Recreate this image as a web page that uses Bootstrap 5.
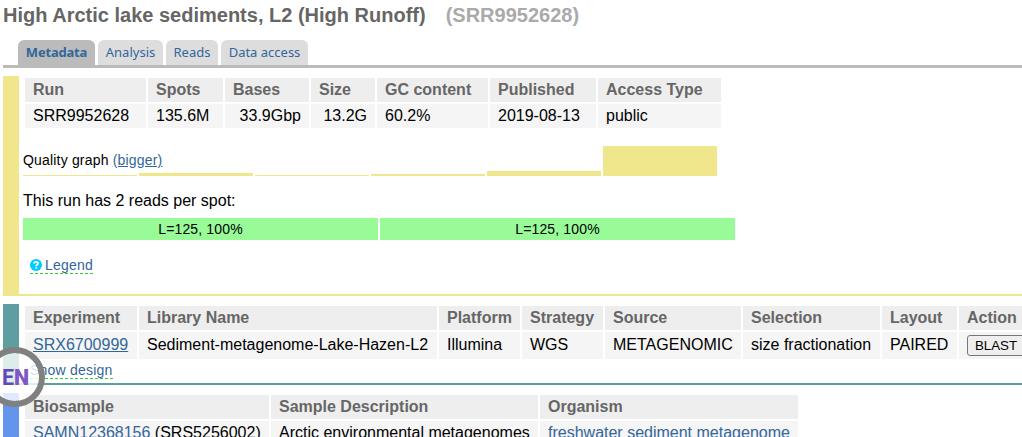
<!DOCTYPE html>
<html lang="en">
<head>
<meta charset="utf-8">
<title>SRR9952628 - Run Browser</title>
<link href="https://cdn.jsdelivr.net/npm/bootstrap@5.3.0/dist/css/bootstrap.min.css" rel="stylesheet">
<style>
body{font-family:"Liberation Sans",Arial,sans-serif;font-size:16px;line-height:20px;color:#000;background:#fff;height:437px;overflow:hidden}
a{color:#369}
.page-wrap{padding-left:3px;height:437px;overflow:hidden}
.run-title{font-size:20px;line-height:24px;font-weight:700;color:#666;margin:0;padding-top:3px;height:40px;white-space:pre}
.run-title span{color:#aaa;margin-left:20px}
.run-tabs{border-bottom:3px solid #bbb;padding-left:15px;gap:3px;height:28px;flex-wrap:nowrap}
.run-tabs .nav-link{height:25px;padding:0;text-align:center;background:#ddd;color:#369;border-radius:6px 6px 0 0;font:13px/25px "Noto Sans","Open Sans",sans-serif;white-space:nowrap}
.run-tabs .nav-link.active{background:#bbb;font-weight:700;letter-spacing:-.2px}
.panel{border-left:16px solid;border-bottom:2px solid;padding-left:4px;margin-bottom:8px}
.panel-run{border-color:khaki;height:220px;margin-top:8px}
.panel-exp{border-color:cadetblue;height:81px}
.panel-bio{border-color:cornflowerblue;height:90px}
.grid-table{table-layout:fixed;border-collapse:separate;border-spacing:2px;white-space:nowrap}
.grid-table th{background:#eee;color:#666;height:24px;padding:1px 8px;line-height:22px}
.grid-table td{background:#f5f5f5;height:24px;padding:1px 8px;line-height:22px}
.panel-exp .grid-table td{height:27px;padding:0 8px 1px}
.fs14{font-size:14px;letter-spacing:.18px}
.quality{height:30px;margin-top:16px;gap:2px}
.qbar{width:114px;background:khaki}
.qlabel{left:0;top:4px}
.reads{gap:2px;font-size:14px;letter-spacing:.15px;line-height:22px}
.reads div{width:355px;background:palegreen;text-align:center}
.toggle{font-size:14px;letter-spacing:.22px;line-height:16px;border-bottom:1px dashed #32cd32;text-decoration:none;margin-left:7px}
.design-row{padding-top:1px}
.blast{height:21px;width:58px;border:1px solid #767676;border-radius:3px;background:#efefef;font-size:13.3px;line-height:19px;padding:0;color:#000;display:block}
.lang{left:-15px;top:347px;width:60px;height:60px;border:6px solid #808080;background:rgba(255,255,255,.8);background-clip:padding-box;font:700 21.5px/50px Roboto,sans-serif;padding-left:11px;color:#6248bb}
.lang b{color:#7d58c6}
</style>
</head>
<body>
<div class="page-wrap position-relative">
<h1 class="run-title">High Arctic lake sediments, L2 (High Runoff)<span>(SRR9952628)</span></h1>
<nav class="nav run-tabs">
<a class="nav-link active" style="width:77px" href="#">Metadata</a><a class="nav-link" style="width:65px" href="#">Analysis</a><a class="nav-link" style="width:52px" href="#">Reads</a><a class="nav-link" style="width:87px" href="#">Data access</a>
</nav>
<section class="panel panel-run">
<table class="grid-table" style="width:700px">
<colgroup><col style="width:121px"><col style="width:75px"><col style="width:84px"><col style="width:64px"><col style="width:111px"><col style="width:106px"><col style="width:123px"></colgroup>
<tr><th>Run</th><th>Spots</th><th>Bases</th><th>Size</th><th>GC content</th><th>Published</th><th>Access Type</th></tr>
<tr><td>SRR9952628</td><td>135.6M</td><td class="text-end">33.9Gbp</td><td class="text-end">13.2G</td><td>60.2%</td><td>2019-08-13</td><td>public</td></tr>
</table>
<div class="quality d-flex align-items-end position-relative">
<div class="qlabel fs14 position-absolute">Quality graph <a href="#">(bigger)</a></div>
<div class="qbar" style="height:1px"></div><div class="qbar" style="height:3px"></div><div class="qbar" style="height:1px"></div><div class="qbar" style="height:2px"></div><div class="qbar" style="height:5px"></div><div class="qbar" style="height:30px"></div>
</div>
<div style="padding-top:15px;height:42px">This run has 2 reads per spot:</div>
<div class="reads d-flex"><div>L=125, 100%</div><div>L=125, 100%</div></div>
<div class="d-flex" style="padding-top:17px"><a href="#" class="toggle d-flex align-items-center"><svg width="12" height="12" viewBox="0 0 12 12" style="margin-right:3px"><circle cx="6" cy="6" r="6" fill="#0cf"/><path d="M4 4.6C4 2.3 8 2.3 8 4.5C8 5.8 6.2 5.7 6.2 7.2M6.2 8.2V9.8" fill="none" stroke="#fff" stroke-width="1.7"/></svg>Legend</a></div>
</section>
<section class="panel panel-exp">
<table class="grid-table" style="width:1004px">
<colgroup><col style="width:112px"><col style="width:298px"><col style="width:81px"><col style="width:81px"><col style="width:136px"><col style="width:137px"><col style="width:75px"><col></colgroup>
<tr><th>Experiment</th><th>Library Name</th><th>Platform</th><th>Strategy</th><th>Source</th><th>Selection</th><th>Layout</th><th>Action</th></tr>
<tr><td><a href="#">SRX6700999</a></td><td>Sediment-metagenome-Lake-Hazen-L2</td><td>Illumina</td><td>WGS</td><td>METAGENOMIC</td><td>size fractionation</td><td>PAIRED</td><td><button class="blast">BLAST</button></td></tr>
</table>
<div class="design-row d-flex"><a href="#" class="toggle">Show design</a></div>
</section>
<section class="panel panel-bio">
<table class="grid-table" style="width:777px">
<colgroup><col style="width:244px"><col style="width:267px"><col style="width:258px"></colgroup>
<tr><th>Biosample</th><th>Sample Description</th><th>Organism</th></tr>
<tr><td><a href="#" class="text-decoration-none">SAMN12368156</a> (SRS5256002)</td><td>Arctic environmental metagenomes</td><td><a href="#" class="text-decoration-none">freshwater sediment metagenome</a></td></tr>
</table>
</section>
<div class="lang position-absolute rounded-circle">E<b>N</b></div>
</div>
<script src="https://cdn.jsdelivr.net/npm/bootstrap@5.3.0/dist/js/bootstrap.bundle.min.js"></script>
</body>
</html>
